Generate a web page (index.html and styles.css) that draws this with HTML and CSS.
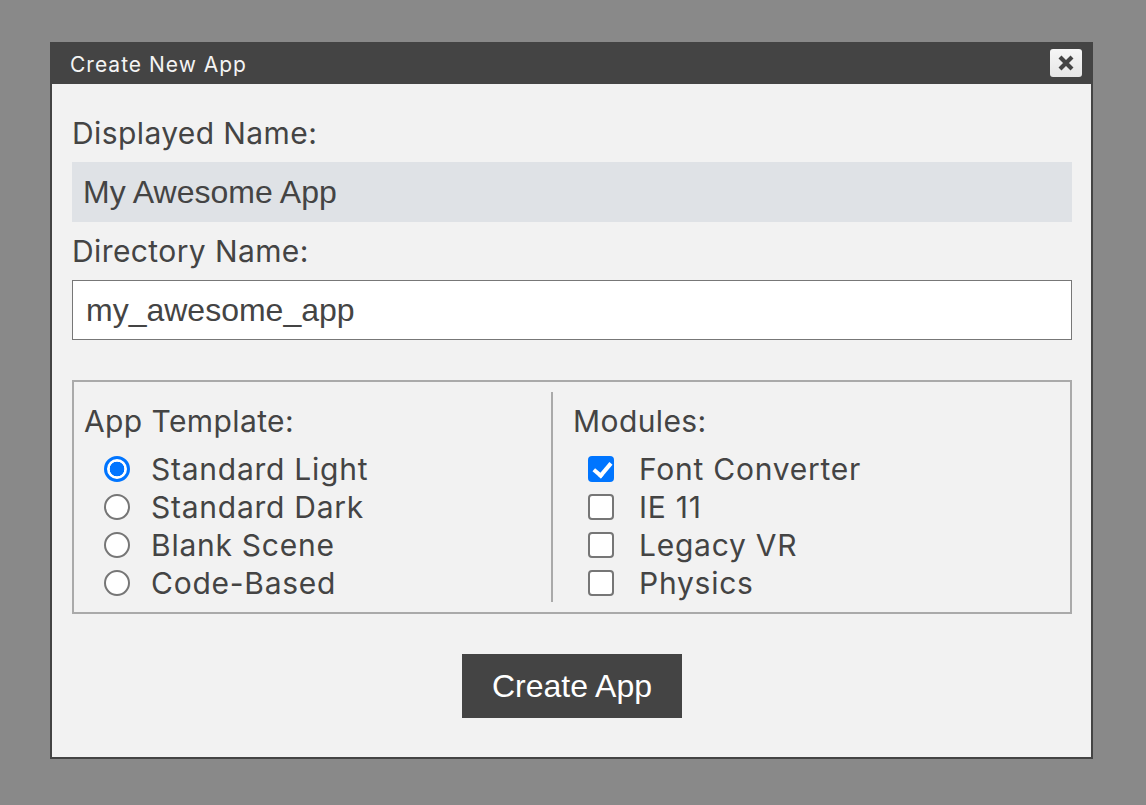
FILE: index.html
```html
<!DOCTYPE html>
<html lang="en">
<head>
<meta charset="utf-8">
<title>Create New App</title>
<link rel="stylesheet" href="styles.css">
</head>
<body>
<div class="dialog">
  <div class="titlebar">
    <span class="title">Create New App</span>
    <button class="close" aria-label="Close">
      <svg width="18" height="18" viewBox="0 0 18 18"><path d="M3 3 L15 15 M15 3 L3 15" stroke="#444" stroke-width="4.2" stroke-linecap="butt"/></svg>
    </button>
  </div>
  <div class="content">
    <label class="field-label" for="dname">Displayed Name:</label>
    <input class="text-input disabled" id="dname" type="text" value="My Awesome App">
    <label class="field-label second" for="dir">Directory Name:</label>
    <input class="text-input" id="dir" type="text" value="my_awesome_app">
    <div class="options">
      <div class="col left">
        <div class="col-head">App Template:</div>
        <label class="opt"><input type="radio" name="tpl" class="radio" checked><span>Standard Light</span></label>
        <label class="opt"><input type="radio" name="tpl" class="radio"><span>Standard Dark</span></label>
        <label class="opt"><input type="radio" name="tpl" class="radio"><span>Blank Scene</span></label>
        <label class="opt"><input type="radio" name="tpl" class="radio"><span>Code-Based</span></label>
      </div>
      <div class="col right">
        <div class="col-head">Modules:</div>
        <label class="opt"><input type="checkbox" class="check" checked><span>Font Converter</span></label>
        <label class="opt"><input type="checkbox" class="check"><span>IE 11</span></label>
        <label class="opt"><input type="checkbox" class="check"><span>Legacy VR</span></label>
        <label class="opt"><input type="checkbox" class="check"><span>Physics</span></label>
      </div>
    </div>
    <div class="actions">
      <button class="create">Create App</button>
    </div>
  </div>
</div>
</body>
</html>
```

FILE: styles.css
```css
* { box-sizing: border-box; }
html, body { margin: 0; padding: 0; }
body {
  background: #898989;
  width: 1146px;
  height: 805px;
  overflow: hidden;
  padding: 42px 0 0 50px;
  font-family: "Inter", "Noto Sans", sans-serif;
  color: #444;
}
.dialog {
  width: 1043px;
  height: 717px;
  border: 2px solid #444;
  border-top: 0;
  background: #f2f2f2;
  display: flex;
  flex-direction: column;
}
.titlebar {
  height: 42px;
  background: #444;
  display: flex;
  align-items: center;
  justify-content: space-between;
  margin: 0 -2px;
  padding-left: 20px;
  padding-right: 11px;
}
.title {
  color: #f4f4f4;
  font-size: 21px;
  letter-spacing: 1px;
  font-weight: 400;
  padding-top: 2px;
}
.close {
  width: 32px;
  height: 28px;
  border: 0;
  border-radius: 3px;
  background: linear-gradient(#f6f6f6, #e6e6e6);
  padding: 0;
  display: flex;
  align-items: center;
  justify-content: center;
}
.content {
  padding: 30px 19px 0 20px;
  display: flex;
  flex-direction: column;
}
.field-label {
  display: block;
  font-size: 30px;
  letter-spacing: 0.4px;
  line-height: 38px;
  margin: 0 0 10px 0;
}
.field-label.second { margin-top: 10px; }
.text-input {
  display: block;
  width: 1000px;
  height: 60px;
  border: 1px solid #777;
  background: #fff;
  font-family: "Liberation Sans", Arial, sans-serif;
  font-size: 32px;
  color: #444;
  padding: 0 13px;
  margin: 0;
  outline: none;
}
.text-input.disabled {
  background: #dfe2e6;
  border-color: #dfe2e6;
  padding-left: 10px;
}
.options {
  margin-top: 40px;
  width: 1000px;
  height: 234px;
  border: 2px solid #aaa;
  padding: 10px;
  display: grid;
  grid-template-columns: 467px 1fr;
}
.col {
  padding-top: 10px;
  display: flex;
  flex-direction: column;
}
.col.right {
  border-left: 2px solid #aaa;
  padding-left: 20px;
}
.col-head {
  font-size: 30px;
  letter-spacing: 0.4px;
  line-height: 38px;
  margin-bottom: 10px;
}
.opt {
  display: flex;
  align-items: center;
  height: 38px;
  font-size: 30px;
  letter-spacing: 0.75px;
}
.radio {
  appearance: none;
  -webkit-appearance: none;
  width: 26px;
  height: 26px;
  margin: 0 21px 0 20px;
  border: 2px solid #767676;
  border-radius: 50%;
  background: #fff;
  flex: none;
}
.radio:checked {
  border: 3px solid #0075ff;
  background: radial-gradient(circle, #0075ff 0 7px, #fff 7.6px);
}
.check {
  appearance: none;
  -webkit-appearance: none;
  width: 26px;
  height: 26px;
  margin: 0 25px 0 15px;
  border: 2px solid #767676;
  border-radius: 4px;
  background: #fff;
  flex: none;
  position: relative;
}
.check:checked {
  border: 0;
  background: #0075ff;
}
.check:checked::after {
  content: "";
  position: absolute;
  left: 9px;
  top: 3px;
  width: 7px;
  height: 14px;
  border-right: 4px solid #fff;
  border-bottom: 4px solid #fff;
  transform: rotate(40deg);
}
.actions {
  display: flex;
  justify-content: center;
  margin-top: 40px;
}
.create {
  width: 220px;
  height: 64px;
  background: #444;
  color: #fff;
  border: 0;
  font-family: "Liberation Sans", Arial, sans-serif;
  font-size: 32px;
  padding: 0;
}
```
